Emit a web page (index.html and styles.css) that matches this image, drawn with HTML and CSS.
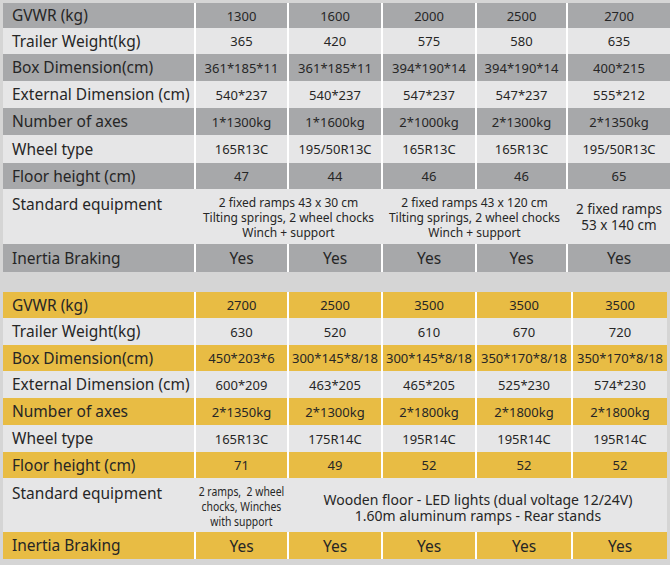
FILE: index.html
```html
<!DOCTYPE html>
<html>
<head>
<meta charset="utf-8">
<link rel="stylesheet" href="styles.css">
</head>
<body>
<div class="sheet">
  <div class="tbl tbl-top">
    <div class="row gray h25"><div class="cell label">GVWR (kg)</div><div class="cell">1300</div><div class="cell">1600</div><div class="cell">2000</div><div class="cell">2500</div><div class="cell">2700</div></div>
    <div class="row light h26"><div class="cell label">Trailer Weight(kg)</div><div class="cell">365</div><div class="cell">420</div><div class="cell">575</div><div class="cell">580</div><div class="cell">635</div></div>
    <div class="row gray h27"><div class="cell label">Box Dimension(cm)</div><div class="cell">361*185*11</div><div class="cell">361*185*11</div><div class="cell">394*190*14</div><div class="cell">394*190*14</div><div class="cell">400*215</div></div>
    <div class="row light h27"><div class="cell label">External Dimension (cm)</div><div class="cell">540*237</div><div class="cell">540*237</div><div class="cell">547*237</div><div class="cell">547*237</div><div class="cell">555*212</div></div>
    <div class="row gray h27"><div class="cell label">Number of axes</div><div class="cell">1*1300kg</div><div class="cell">1*1600kg</div><div class="cell">2*1000kg</div><div class="cell">2*1300kg</div><div class="cell">2*1350kg</div></div>
    <div class="row light h28"><div class="cell label">Wheel type</div><div class="cell">165R13C</div><div class="cell">195/50R13C</div><div class="cell">165R13C</div><div class="cell">165R13C</div><div class="cell">195/50R13C</div></div>
    <div class="row gray h26"><div class="cell label">Floor height (cm)</div><div class="cell">47</div><div class="cell">44</div><div class="cell">46</div><div class="cell">46</div><div class="cell">65</div></div>
    <div class="row light std h55"><div class="cell label">Standard equipment</div><div class="cell span2 eq">2 fixed ramps 43 x 30 cm<br>Tilting springs, 2 wheel chocks<br>Winch + support</div><div class="cell span2 eq">2 fixed ramps 43 x 120 cm<br>Tilting springs, 2 wheel chocks<br>Winch + support</div><div class="cell eq eq-lg">2 fixed ramps<br>53 x 140 cm</div></div>
    <div class="row gray yes h28"><div class="cell label">Inertia Braking</div><div class="cell">Yes</div><div class="cell">Yes</div><div class="cell">Yes</div><div class="cell">Yes</div><div class="cell">Yes</div></div>
  </div>
  <div class="tbl tbl-bot">
    <div class="row gold h26"><div class="cell label">GVWR (kg)</div><div class="cell">2700</div><div class="cell">2500</div><div class="cell">3500</div><div class="cell">3500</div><div class="cell">3500</div></div>
    <div class="row light h27"><div class="cell label">Trailer Weight(kg)</div><div class="cell">630</div><div class="cell">520</div><div class="cell">610</div><div class="cell">670</div><div class="cell">720</div></div>
    <div class="row gold h26"><div class="cell label">Box Dimension(cm)</div><div class="cell">450*203*6</div><div class="cell">300*145*8/18</div><div class="cell">300*145*8/18</div><div class="cell">350*170*8/18</div><div class="cell">350*170*8/18</div></div>
    <div class="row light h27"><div class="cell label">External Dimension (cm)</div><div class="cell">600*209</div><div class="cell">463*205</div><div class="cell">465*205</div><div class="cell">525*230</div><div class="cell">574*230</div></div>
    <div class="row gold h27"><div class="cell label">Number of axes</div><div class="cell">2*1350kg</div><div class="cell">2*1300kg</div><div class="cell">2*1800kg</div><div class="cell">2*1800kg</div><div class="cell">2*1800kg</div></div>
    <div class="row light h27"><div class="cell label">Wheel type</div><div class="cell">165R13C</div><div class="cell">175R14C</div><div class="cell">195R14C</div><div class="cell">195R14C</div><div class="cell">195R14C</div></div>
    <div class="row gold h26"><div class="cell label">Floor height (cm)</div><div class="cell">71</div><div class="cell">49</div><div class="cell">52</div><div class="cell">52</div><div class="cell">52</div></div>
    <div class="row light std h54"><div class="cell label">Standard equipment</div><div class="cell eq eq-narrow"><span class="squeeze">2 ramps,&nbsp; 2 wheel<br>chocks, Winches<br>with support</span></div><div class="cell span4 eq eq-wide">Wooden floor - LED lights (dual voltage 12/24V)<br>1.60m aluminum ramps - Rear stands</div></div>
    <div class="row gold yes h27"><div class="cell label">Inertia Braking</div><div class="cell">Yes</div><div class="cell">Yes</div><div class="cell">Yes</div><div class="cell">Yes</div><div class="cell">Yes</div></div>
  </div>
</div>
</body>
</html>
```
FILE: styles.css
```css
* { box-sizing: border-box; }
html, body { margin: 0; padding: 0; }
body {
  width: 670px;
  height: 565px;
  overflow: hidden;
  background: #d5d5d5;
  font-family: "Noto Sans", "Open Sans", sans-serif;
  color: #262626;
}
.sheet {
  padding: 3px 0 0 3px;
  display: flex;
  flex-direction: column;
  gap: 20px;
}
.tbl { display: flex; flex-direction: column; }
.row { display: grid; height: 27px; }
.tbl-top .row { grid-template-columns: 191px 93px 94px 94px 91px 104px; }
.tbl-bot .row { grid-template-columns: 191px 93px 94px 94px 96px 96px; }
.h25 { height: 25px; }
.h26 { height: 26px; }
.h27 { height: 27px; }
.h28 { height: 28px; }
.h54 { height: 54px; }
.h55 { height: 55px; }

.cell {
  display: flex;
  align-items: center;
  justify-content: center;
  text-align: center;
  border-left: 2px solid #ffffff;
  font-size: 13px;
  line-height: 16px;
  white-space: nowrap;
}
.cell.label {
  justify-content: flex-start;
  border-left: 0;
  padding-left: 9px;
  font-size: 15.5px;
  padding-bottom: 1px;
}
.gray .cell { background: #a7a8aa; }
.light .cell { background: #e6e6e7; }
.gold .cell { background: #e8bc44; }
.yes .cell { font-size: 15.5px; }

.std .cell { border-left-color: #e6e6e7; }
.std .cell.label { align-items: flex-start; padding-top: 7px; }
.span2 { grid-column: span 2; }
.span4 { grid-column: span 4; }
.eq { font-size: 12px; line-height: 15px; padding-top: 1px; }
.eq-lg { font-size: 13.5px; line-height: 16px; }
.eq-wide { font-size: 14px; line-height: 16px; padding-top: 5px; }
.eq-narrow { font-size: 13px; line-height: 15px; padding-top: 2px; }
.squeeze { display: inline-block; transform: scaleX(0.8); }
```
